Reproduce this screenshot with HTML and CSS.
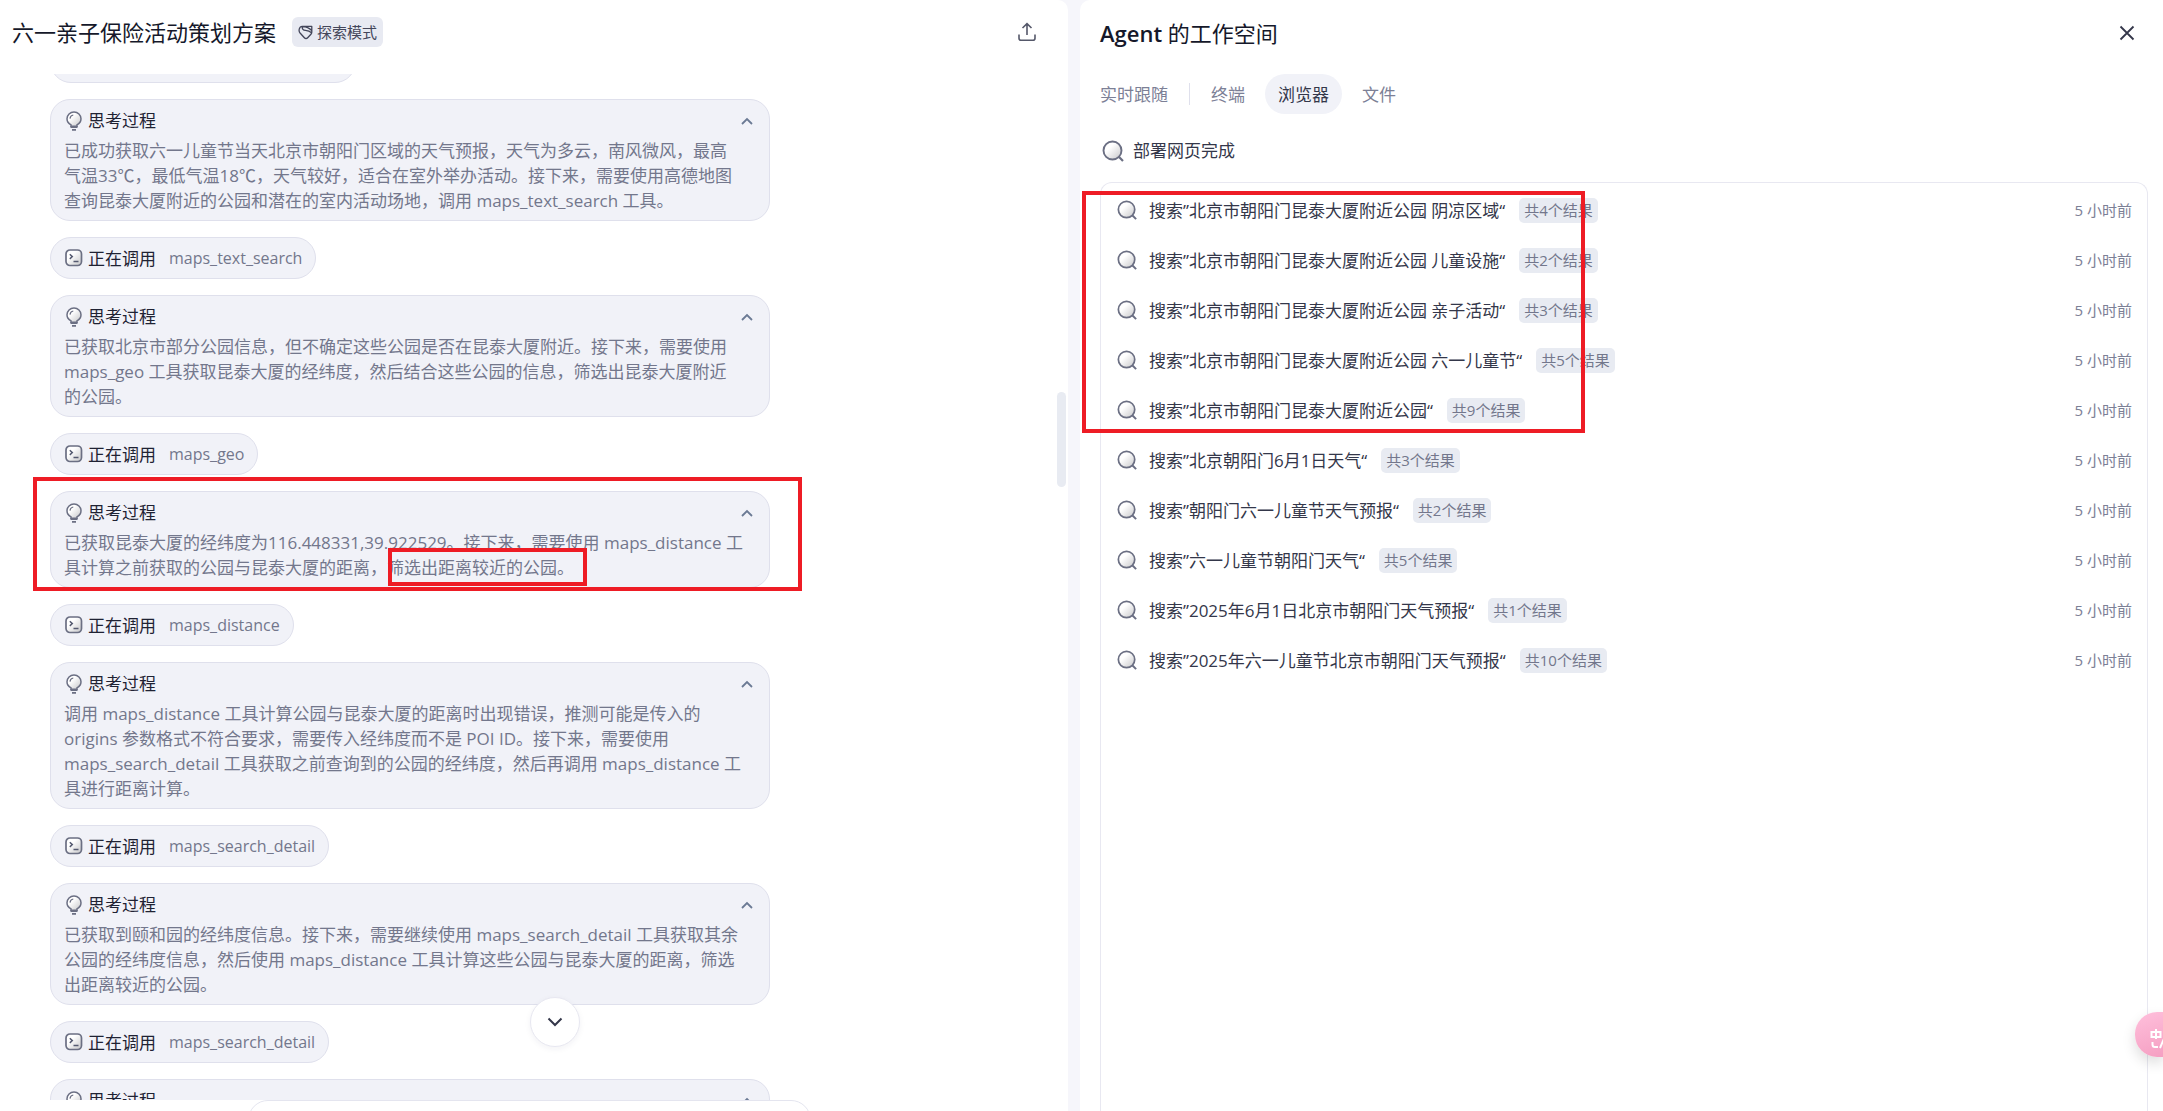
FILE: index.html
```html
<!DOCTYPE html>
<html lang="zh-CN">
<head>
<meta charset="utf-8">
<title>六一亲子保险活动策划方案</title>
<link rel="stylesheet" href="styles.css">
</head>
<body>
<svg class="defs" aria-hidden="true">
  <defs>
    <linearGradient id="shade" x1="0" y1="0" x2="1" y2="1"><stop offset="0.35" stop-color="#fff"/><stop offset="1" stop-color="#c6c6c8"/></linearGradient>
    <symbol id="bulb" viewBox="0 0 16 20">
      <path d="M5 15.200v-1.400C2.600 12.600 1 10.400 1 7.800 1 4 4.100 1 8 1s7 3 7 6.800c0 2.600-1.600 4.800-4 6v1.400z" fill="url(#shade)" stroke="#6b6f83" stroke-width="1.500"/>
      <path d="M4 7.600C4.200 5.600 5.500 4.300 7.300 4" fill="none" stroke="#6b6f83" stroke-width="1.200"/>
      <path d="M4.500 16h7M6 18.800h4" stroke="#6b6f83" stroke-width="1.800"/>
    </symbol>
    <symbol id="term" viewBox="0 0 18 18">
      <rect x="1" y="1" width="15.500" height="15.500" rx="4" fill="url(#shade)" stroke="#6b6f83" stroke-width="1.700"/>
      <path d="M4.800 5.300l2.500 2.300-2.500 2.300M8.500 12.500h5" fill="none" stroke="#555a70" stroke-width="1.500"/>
    </symbol>
    <symbol id="search" viewBox="0 0 22 22">
      <circle cx="10.500" cy="10.500" r="9" fill="url(#shade)" stroke="#6b6f83" stroke-width="1.900"/>
      <path d="M16.800 16.800l4.200 4.200" stroke="#6b6f83" stroke-width="2.200"/>
    </symbol>
    <symbol id="up" viewBox="0 0 12 8"><path d="M1 7l5-5 5 5" fill="none" stroke="#6b7a94" stroke-width="1.800"/></symbol>
  </defs>
</svg>
<div class="app">
  <main class="chat">
    <header class="chat-head">
      <h1 class="title">六一亲子保险活动策划方案</h1>
      <span class="mode"><svg class="mode-icon" viewBox="0 0 16 16"><path d="M4.500 1.500h10.200v6.200c0 .9-.3 1.500-.9 2.100l-3.500 3.800c-1 1.100-2.500 1.100-3.500 0L2.200 8.600C.2 6.300 1.300 1.500 4.500 1.500zM4.500 1.500C4.200 4.300 5.500 5.600 8 5.700c2.300.1 4.600.8 6.500 2.600M5 1.600c3.500.2 7 1.600 9.600 4.300" fill="none" stroke="#43465a" stroke-width="1.400" stroke-linejoin="round"/></svg>探索模式</span>
      <button class="icon-btn share" aria-label="分享"><svg width="18" height="20" viewBox="0 0 18 20"><path d="M9 13V2M4.500 6L9 1.600 13.500 6M1 12.500v3.800c0 1.200.8 2 2 2h12c1.200 0 2-.8 2-2v-3.800" fill="none" stroke="#55586a" stroke-width="1.600"/></svg></button>
    </header>
    <div class="stream-wrap">
      <div class="stream">
        <div class="call first"></div>
        <section class="think">
          <button class="think-head"><svg class="bulb"><use href="#bulb"/></svg>思考过程<svg class="up"><use href="#up"/></svg></button>
          <p>已成功获取六一儿童节当天北京市朝阳门区域的天气预报，天气为多云，南风微风，最高<br>气温33℃，最低气温18℃，天气较好，适合在室外举办活动。接下来，需要使用高德地图<br>查询昆泰大厦附近的公园和潜在的室内活动场地，调用 maps_text_search 工具。</p>
        </section>
        <div class="call"><svg class="term"><use href="#term"/></svg>正在调用<span class="tool">maps_text_search</span></div>
        <section class="think">
          <button class="think-head"><svg class="bulb"><use href="#bulb"/></svg>思考过程<svg class="up"><use href="#up"/></svg></button>
          <p>已获取北京市部分公园信息，但不确定这些公园是否在昆泰大厦附近。接下来，需要使用<br>maps_geo 工具获取昆泰大厦的经纬度，然后结合这些公园的信息，筛选出昆泰大厦附近<br>的公园。</p>
        </section>
        <div class="call"><svg class="term"><use href="#term"/></svg>正在调用<span class="tool">maps_geo</span></div>
        <section class="think">
          <button class="think-head"><svg class="bulb"><use href="#bulb"/></svg>思考过程<svg class="up"><use href="#up"/></svg></button>
          <p>已获取昆泰大厦的经纬度为116.448331,39.922529。接下来，需要使用 maps_distance 工<br>具计算之前获取的公园与昆泰大厦的距离，筛选出距离较近的公园。</p>
        </section>
        <div class="call"><svg class="term"><use href="#term"/></svg>正在调用<span class="tool">maps_distance</span></div>
        <section class="think">
          <button class="think-head"><svg class="bulb"><use href="#bulb"/></svg>思考过程<svg class="up"><use href="#up"/></svg></button>
          <p>调用 maps_distance 工具计算公园与昆泰大厦的距离时出现错误，推测可能是传入的<br>origins 参数格式不符合要求，需要传入经纬度而不是 POI ID。接下来，需要使用<br>maps_search_detail 工具获取之前查询到的公园的经纬度，然后再调用 maps_distance 工<br>具进行距离计算。</p>
        </section>
        <div class="call"><svg class="term"><use href="#term"/></svg>正在调用<span class="tool">maps_search_detail</span></div>
        <section class="think">
          <button class="think-head"><svg class="bulb"><use href="#bulb"/></svg>思考过程<svg class="up"><use href="#up"/></svg></button>
          <p>已获取到颐和园的经纬度信息。接下来，需要继续使用 maps_search_detail 工具获取其余<br>公园的经纬度信息，然后使用 maps_distance 工具计算这些公园与昆泰大厦的距离，筛选<br>出距离较近的公园。</p>
        </section>
        <div class="call"><svg class="term"><use href="#term"/></svg>正在调用<span class="tool">maps_search_detail</span></div>
        <section class="think">
          <button class="think-head"><svg class="bulb"><use href="#bulb"/></svg>思考过程<svg class="up"><use href="#up"/></svg></button>
        </section>
      </div>
      <div class="thumb"></div>
      <button class="to-bottom" aria-label="回到底部"><svg width="16" height="10" viewBox="0 0 16 10"><path d="M1.500 1.500L8 8l6.500-6.500" fill="none" stroke="#34374a" stroke-width="2"/></svg></button>
    </div>
    <footer class="composer-row"><div class="composer"></div></footer>
  </main>

  <aside class="work">
    <header class="work-head">
      <h2 class="title"><span class="latin">Agent</span> 的工作空间</h2>
      <button class="icon-btn" aria-label="关闭"><svg width="16" height="16" viewBox="0 0 16 16"><path d="M1.500 1.500l13 13M14.500 1.500l-13 13" stroke="#34374a" stroke-width="1.800"/></svg></button>
    </header>
    <nav class="tabs">
      <button class="tab follow">实时跟随</button>
      <span class="rule"></span>
      <button class="tab">终端</button>
      <button class="tab active">浏览器</button>
      <button class="tab">文件</button>
    </nav>
    <div class="status"><svg class="search-lg"><use href="#search"/></svg>部署网页完成</div>
    <ul class="results">
      <li><svg class="search"><use href="#search"/></svg><span>搜索”北京市朝阳门昆泰大厦附近公园 阴凉区域“</span><span class="count">共4个结果</span><time>5 小时前</time></li>
      <li><svg class="search"><use href="#search"/></svg><span>搜索”北京市朝阳门昆泰大厦附近公园 儿童设施“</span><span class="count">共2个结果</span><time>5 小时前</time></li>
      <li><svg class="search"><use href="#search"/></svg><span>搜索”北京市朝阳门昆泰大厦附近公园 亲子活动“</span><span class="count">共3个结果</span><time>5 小时前</time></li>
      <li><svg class="search"><use href="#search"/></svg><span>搜索”北京市朝阳门昆泰大厦附近公园 六一儿童节“</span><span class="count">共5个结果</span><time>5 小时前</time></li>
      <li><svg class="search"><use href="#search"/></svg><span>搜索”北京市朝阳门昆泰大厦附近公园“</span><span class="count">共9个结果</span><time>5 小时前</time></li>
      <li><svg class="search"><use href="#search"/></svg><span>搜索”北京朝阳门6月1日天气“</span><span class="count">共3个结果</span><time>5 小时前</time></li>
      <li><svg class="search"><use href="#search"/></svg><span>搜索”朝阳门六一儿童节天气预报“</span><span class="count">共2个结果</span><time>5 小时前</time></li>
      <li><svg class="search"><use href="#search"/></svg><span>搜索”六一儿童节朝阳门天气“</span><span class="count">共5个结果</span><time>5 小时前</time></li>
      <li><svg class="search"><use href="#search"/></svg><span>搜索”2025年6月1日北京市朝阳门天气预报“</span><span class="count">共1个结果</span><time>5 小时前</time></li>
      <li><svg class="search"><use href="#search"/></svg><span>搜索”2025年六一儿童节北京市朝阳门天气预报“</span><span class="count">共10个结果</span><time>5 小时前</time></li>
    </ul>
  </aside>
</div>
<button class="translate" aria-label="翻译"><svg width="24" height="24" viewBox="0 0 24 24"><path d="M1.500 4h9v5h-9zM6 1v10M2.500 14v2.500c0 1.500 1 2.500 2.500 2.500h3M10 20l3-7 3 7" fill="none" stroke="#fff" stroke-width="2"/></svg></button>
<div class="mark mark-step"></div>
<div class="mark mark-phrase"></div>
<div class="mark mark-results"></div>
</body>
</html>
```
FILE: styles.css
```css
* { box-sizing: border-box; }
body {
  margin: 0;
  font-family: "Open Sans", "Noto Sans CJK SC", sans-serif;
  font-size: 17px;
  line-height: 25px;
  color: #1f2233;
  background: #f6f6fb;
}
button { border: 0; padding: 0; background: none; font: inherit; color: inherit; cursor: pointer; }
svg { display: block; flex: none; }
.defs { position: absolute; width: 0; height: 0; }

.app { display: grid; grid-template-columns: 1068fr 1083fr; grid-template-rows: 100%; gap: 12px; height: 100vh; overflow: hidden; }
.chat, .work { display: flex; flex-direction: column; background: #fff; min-width: 0; }
.chat { border-radius: 0 10px 0 0; }
.work { border-radius: 10px 0 0 0; padding: 0 15px 0 20px; }
.title { margin: 0; font-size: 22px; line-height: 30px; font-weight: 400; color: #15182a; white-space: nowrap; }
.latin { font-weight: 600; }

.chat-head { display: flex; align-items: center; height: 74px; flex: none; padding: 0 32px 10px 12px; }
.mode { display: flex; align-items: center; gap: 4px; height: 30px; margin-left: 16px; padding: 0 6px; border-radius: 6px; background: #e8eaf2; color: #43465a; font-size: 15px; }
.mode-icon { width: 15px; height: 15px; }
.icon-btn { display: flex; margin-left: auto; }

.stream-wrap { position: relative; flex: 1; min-height: 0; overflow: hidden; }
.stream { display: flex; flex-direction: column; align-items: flex-start; gap: 16px; padding-left: 50px; }
.think, .call { border: 1px solid #dfe0ec; background: #f1f2f8; }
.think { width: 720px; border-radius: 20px; padding: 8px 13px 7px; flex: none; }
.think-head { display: flex; align-items: center; width: 100%; height: 25px; margin-bottom: 5px; text-align: left; }
.bulb { width: 16px; height: 20px; margin: 0 6px 0 2px; }
.up { width: 12px; height: 8px; margin-left: auto; margin-right: 3px; }
.think p { margin: 0; color: #73778c; white-space: nowrap; }
.call { display: flex; align-items: center; height: 42px; padding: 0 13px 0 14px; border-radius: 21px; }
.call.first { width: 306px; margin-top: -33px; }
.term { width: 18px; height: 18px; margin-right: 5px; }
.tool { margin-left: 13px; font-size: 16px; color: #73778c; }
.thumb { position: absolute; right: 2px; top: 318px; width: 9px; height: 95px; border-radius: 5px; background: #e8ebf2; }
.to-bottom { position: absolute; left: 530px; bottom: 53px; width: 50px; height: 50px; display: flex; align-items: center; justify-content: center; border: 1px solid #e8e8f1; border-radius: 50%; background: #fff; box-shadow: 0 2px 6px rgba(40, 40, 80, 0.06); }
.composer-row { flex: none; height: 11px; padding-left: 248px; overflow: hidden; }
.composer { width: 563px; height: 60px; border: 1px solid #e4e5ef; border-radius: 20px; }

.work-head { display: flex; align-items: center; justify-content: space-between; height: 66px; padding-right: 13px; flex: none; }
.tabs { display: flex; align-items: center; height: 40px; margin-top: 8px; flex: none; }
.tab { height: 40px; padding: 0 13px; border-radius: 20px; color: #7c8096; }
.tab + .tab { margin-left: 7px; }
.tab.follow { padding: 0 21px 0 0; }
.rule { width: 1px; height: 22px; margin-right: 8px; background: #dfe0ec; }
.tab.active { background: #f1f2f8; color: #34374a; }
.status { display: flex; align-items: center; gap: 9px; margin: 24px 0 19px 2px; color: #34374a; }
.search-lg { width: 22px; height: 22px; }
.results { flex: 1; margin: 0; padding: 2px 15px 0 16px; list-style: none; border: 1px solid #e8e8f1; border-bottom: 0; border-radius: 12px 12px 0 0; color: #34374a; }
.results li { display: flex; align-items: center; height: 50px; white-space: nowrap; }
.search { width: 20px; height: 20px; margin-right: 12px; }
.count { height: 25px; margin-left: 14px; padding: 0 5px; border-radius: 5px; background: #e8ebf2; color: #73778c; font-size: 15px; }
.results time { margin-left: auto; font-size: 15px; color: #7c8096; }

.translate { position: fixed; right: 0; bottom: 54px; width: 28px; height: 45px; padding: 10px 0 0 15px; overflow: hidden; border-radius: 22px 0 0 22px; background: linear-gradient(160deg, #ffc0dc, #f59fc2); box-shadow: 0 6px 14px rgba(0, 0, 0, 0.14); }
.mark { position: absolute; border: 4px solid #ee1c25; pointer-events: none; }
.mark-step { left: 33px; top: 477px; width: 769px; height: 114px; }
.mark-phrase { left: 388px; top: 548px; width: 199px; height: 38px; }
.mark-results { left: 1082px; top: 191px; width: 503px; height: 242px; }
```
